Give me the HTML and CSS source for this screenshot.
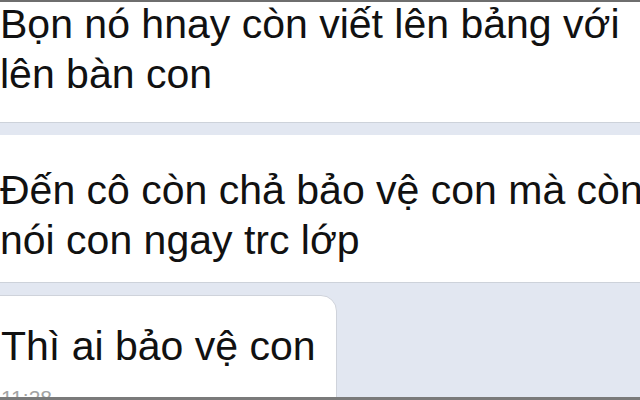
FILE: index.html
```html
<!DOCTYPE html>
<html lang="vi">
<head>
<meta charset="UTF-8" />
<meta name="viewport" content="width=device-width, initial-scale=1" />
<title>Tin nhắn</title>
<link rel="stylesheet" href="styles.css">
</head>
<body>

<div class="screen">
  <div class="bubble bubble-first">
    <p class="msg">Bọn nó hnay còn viết lên bảng với<br>lên bàn con</p>
  </div>

  <div class="bubble bubble-second">
    <p class="msg">Đến cô còn chả bảo vệ con mà còn<br>nói con ngay trc lớp</p>
  </div>

  <div class="bubble bubble-last">
    <p class="msg">Thì ai bảo vệ con</p>
    <span class="time">11:28</span>
  </div>
</div>

</body>
</html>
```

FILE: styles.css
```css
html, body {
  margin: 0;
  padding: 0;
}
body {
  font-family: "Liberation Sans", Arial, sans-serif;
  background: #e2e7f1;
  overflow: hidden;
}
.screen {
  box-sizing: border-box;
  height: 400px;
  border-top: 2px solid #6e6e6e;
  border-bottom: 3px solid #7a7a7a;
  display: flex;
  flex-direction: column;
  gap: 12px;
  overflow: hidden;
  background: #e2e7f1;
}
.bubble {
  flex-shrink: 0;
  background: #fff;
  border-bottom: 1px solid #cdd2da;
  overflow: hidden;
}
.msg {
  margin: 0;
  font-size: 41px;
  line-height: 50px;
  color: #111;
  white-space: nowrap;
}
.bubble-first {
  height: 120px;
}
.bubble-first .msg {
  margin-top: -3px;
}
.bubble-second {
  height: 148px;
  padding-top: 30px;
  box-sizing: border-box;
}
.bubble-last {
  width: 357px;
  margin-left: -20px;
  padding: 25px 0 0 20px;
  box-sizing: border-box;
  border: 1px solid #cfd3db;
  border-top-right-radius: 16px;
  min-height: 130px;
}
.time {
  display: block;
  margin-top: 15px;
  font-size: 21px;
  line-height: 24px;
  color: #a3a3a3;
}
```
